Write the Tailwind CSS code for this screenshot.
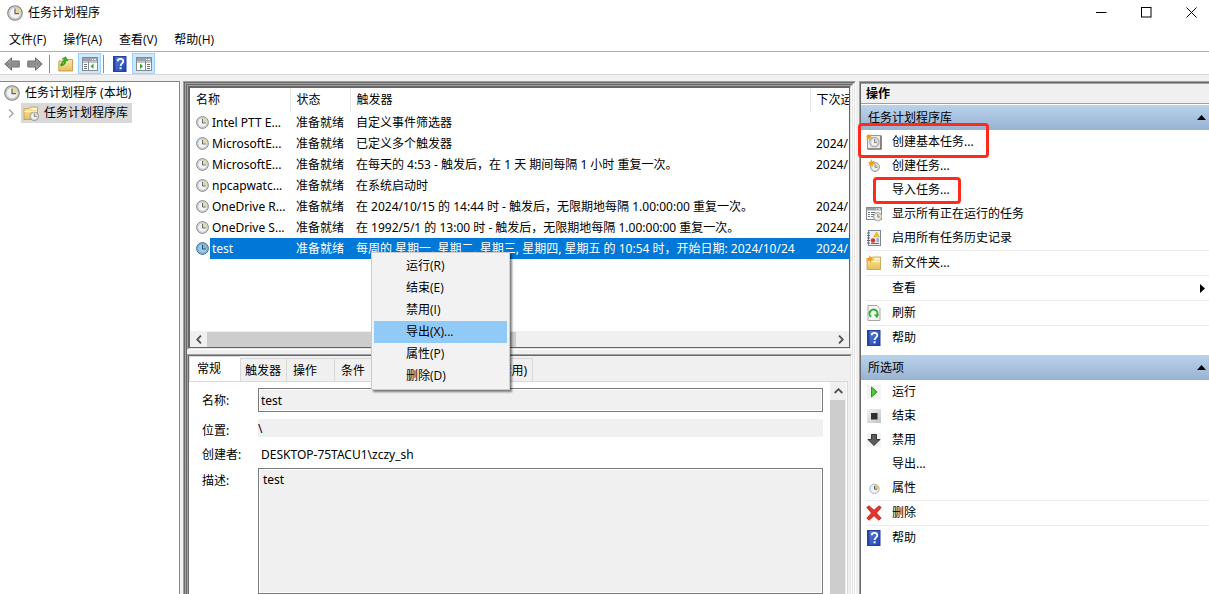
<!DOCTYPE html>
<html lang="zh-CN">
<head>
<meta charset="utf-8">
<title>任务计划程序</title>
<script src="https://cdn.jsdelivr.net/npm/@tailwindcss/browser@4"></script>
</head>
<body class="h-screen overflow-hidden bg-[#f0f0f0] font-['Noto_Sans','Noto_Sans_CJK_SC',sans-serif] text-xs leading-4 text-black">

<svg class="absolute size-0" aria-hidden="true">
  <defs>
    <linearGradient id="gArrow" x1="0" y1="0" x2="0" y2="1"><stop offset="0" stop-color="#b5b5b5"/><stop offset=".5" stop-color="#8a8a8a"/><stop offset="1" stop-color="#a8a8a8"/></linearGradient>
    <linearGradient id="gHelp" x1="0" y1="0" x2="1" y2="1"><stop offset="0" stop-color="#5f86e0"/><stop offset="1" stop-color="#1c3fae"/></linearGradient>
    <linearGradient id="gFolder" x1="0" y1="0" x2="0" y2="1"><stop offset="0" stop-color="#fbe9a8"/><stop offset="1" stop-color="#e6bf5c"/></linearGradient>
    <linearGradient id="gStop" x1="0" y1="0" x2="1" y2="1"><stop offset="0" stop-color="#f4f4f4"/><stop offset="1" stop-color="#c2c2c2"/></linearGradient>
    <symbol id="clock" viewBox="0 0 16 16">
      <circle cx="8" cy="8" r="7.3" fill="#d6d6d6" stroke="#858585" stroke-width="1.1"/>
      <circle cx="8" cy="8" r="5.6" fill="#f1f3f6" stroke="#b4b4b4" stroke-width=".6"/>
      <path d="M8 8V2.4A5.6 5.6 0 0 1 13.6 8Z" fill="#e9d9a0"/>
      <path d="M8 3.5V8.6H12" fill="none" stroke="#5b6675" stroke-width="1.2"/>
    </symbol>
    <symbol id="clockSel" viewBox="0 0 16 16">
      <circle cx="8" cy="8" r="7.3" fill="#8dbbe3" stroke="#38698f" stroke-width="1.1"/>
      <circle cx="8" cy="8" r="5.6" fill="#9cc9ee" stroke="#5f91ba" stroke-width=".6"/>
      <path d="M8 8V2.4A5.6 5.6 0 0 1 13.6 8Z" fill="#8fb7b3"/>
      <path d="M8 3.5V8.6H12" fill="none" stroke="#1e4a72" stroke-width="1.2"/>
    </symbol>
    <symbol id="help" viewBox="0 0 14 16">
      <rect x=".5" y=".5" width="12.5" height="15" fill="url(#gHelp)" stroke="#23409a"/>
      <rect x="0" y="0" width="2.5" height="16" fill="#2443a4"/>
      <path d="M4.8 5.3C4.8 2.2 10.3 2.2 10.3 5.2C10.3 7.3 7.6 7.4 7.6 10" fill="none" stroke="#fff" stroke-width="1.8"/>
      <rect x="6.6" y="11.3" width="2" height="2" fill="#fff"/>
    </symbol>
    <symbol id="arrow" viewBox="0 0 16 14">
      <path d="M.8 7L7.5 .8V4H15.2V10H7.5V13.2Z" fill="url(#gArrow)" stroke="#6d6d6d"/>
    </symbol>
    <symbol id="folder" viewBox="0 0 16 16">
      <path d="M1 14.5V3.5H6L7.5 2H14.5V14.5Z" fill="url(#gFolder)" stroke="#c39b45" stroke-width=".8"/>
      <path d="M9 4H14" stroke="#fff" stroke-width="1.2"/>
      <path d="M1.5 6.5H14" stroke="#fff5cf" stroke-width="1"/>
    </symbol>
    <symbol id="spark" viewBox="0 0 8 8">
      <path d="M4 0L4.8 2.4L7.4 1.2L5.9 3.7L8 5L5.4 5.2L5 8L3.4 5.7L.8 7L2 4.6L0 3.4L2.6 3Z" fill="#f59d18"/>
    </symbol>
    <symbol id="win" viewBox="0 0 16 14">
      <rect x=".5" y=".5" width="15" height="13" fill="#fff" stroke="#868b92"/>
      <rect x="1" y="1" width="14" height="3" fill="#9aa1aa"/>
      <path d="M10 2.5H11M12 2.5H14" stroke="#fff"/>
    </symbol>
  </defs>
</svg>

<div class="flex h-full flex-col">
  <header class="bg-white">
    <div class="flex h-[26px] items-center pl-[7px]">
      <svg class="size-4"><use href="#clock"/></svg>
      <h1 class="ml-[5px]">任务计划程序</h1>
      <div class="ml-auto flex gap-[34px] pr-3 pb-px">
        <button aria-label="最小化"><svg class="size-[11px]" viewBox="0 0 11 11"><path d="M0 5.5H10.5" stroke="#000"/></svg></button>
        <button aria-label="最大化"><svg class="size-[11px]" viewBox="0 0 11 11"><rect x=".5" y=".5" width="9.5" height="9.5" fill="none" stroke="#000"/></svg></button>
        <button aria-label="关闭"><svg class="size-[11px]" viewBox="0 0 11 11"><path d="M.5 .5L10.5 10.5M10.5 .5L.5 10.5" stroke="#000"/></svg></button>
      </div>
    </div>
    <nav class="flex h-[25px] items-center gap-[17px] pt-[3px] pl-[9px] font-['Open_Sans','Noto_Sans_CJK_SC',sans-serif]">
      <button>文件(F)</button><button>操作(A)</button><button>查看(V)</button><button>帮助(H)</button>
    </nav>
    <div class="flex h-6 items-center border-y border-t-[#adb0b6] border-b-[#d9d9d9] pt-px pl-1">
      <button aria-label="后退"><svg class="h-[14px] w-4"><use href="#arrow"/></svg></button>
      <button aria-label="前进" class="ml-[7px]"><svg class="h-[14px] w-4 rotate-180"><use href="#arrow"/></svg></button>
      <span class="ml-[6px] h-[18px] w-px bg-[#8d8d8d]"></span>
      <button aria-label="上一级" class="ml-2"><svg class="size-4" viewBox="0 0 16 16"><path d="M.8 15V5H8L9.5 3.5H14.5V15Z" fill="url(#gFolder)" stroke="#c39b45" stroke-width=".9"/><path d="M3 10C3 6.5 4.5 5.5 6 5V8L2.5 8.5M3 10C6.5 9.5 8 7 8 4.5H10L7.5 .8L4 3H6C5.8 5.5 4.5 7.5 3 10Z" fill="#3db52a" stroke="#248a17" stroke-width=".6"/></svg></button>
      <button aria-label="显示/隐藏控制台树" class="ml-1 flex h-[21px] w-[23px] items-center justify-center border border-[#99d1ff] bg-[#cce8ff]"><svg class="h-[14px] w-4" viewBox="0 0 16 14"><use href="#win"/><path d="M6.5 4V13M1 5H15" stroke="#868b92"/><path d="M2 7.5H5M2 9.5H5M2 11.5H5" stroke="#6c7680"/><path d="M11.5 6.5V12L8.5 9.2Z" fill="#37a52b"/></svg></button>
      <span class="ml-[2px] h-[18px] w-px bg-[#8d8d8d]"></span>
      <button aria-label="帮助" class="ml-[9px]"><svg class="h-4 w-[14px]"><use href="#help"/></svg></button>
      <button aria-label="显示/隐藏操作窗格" class="ml-[5px] flex h-[21px] w-[23px] items-center justify-center border border-[#99d1ff] bg-[#cce8ff]"><svg class="h-[14px] w-4" viewBox="0 0 16 14"><use href="#win"/><path d="M9.5 4V13M1 5H15" stroke="#868b92"/><path d="M11 7.5H14M11 9.5H14M11 11.5H14" stroke="#6c7680"/><path d="M4 6.5V12L7 9.2Z" fill="#37a52b"/></svg></button>
    </div>
  </header>

  <main class="flex min-h-0 flex-1 pt-[6px]">
    <aside class="w-[180px] shrink-0 border-t border-r border-[#828790] bg-white pt-px pl-1">
      <div class="flex h-5 items-center"><svg class="size-4"><use href="#clock"/></svg><span class="ml-[5px]">任务计划程序 (本地)</span></div>
      <div class="flex h-5 items-center">
        <svg class="ml-1 h-[9px] w-[6px]" viewBox="0 0 6 9"><path d="M1 .5L5 4.5L1 8.5" fill="none" stroke="#a0a0a0" stroke-width="1.4"/></svg>
        <div class="ml-[7px] flex h-5 items-center bg-[#d9d9d9] pr-1 pl-[2px]">
          <svg class="size-4" viewBox="0 0 16 16"><use href="#folder"/><use href="#clock" x="6.5" y="6.5" width="9.5" height="9.5"/></svg><span class="ml-[5px]">任务计划程序库</span>
        </div>
      </div>
    </aside>

    <section class="relative ml-[3px] flex min-w-0 flex-1 border border-b-0 border-t-[#a0a0a0] border-r-white border-l-[#a0a0a0]">
     <div class="flex min-w-0 flex-1 border border-b-0 border-t-[#696969] border-r-[#e3e3e3] border-l-[#696969]">
      <div class="flex min-w-0 flex-1 flex-col border border-b-0 border-t-[#a0a0a0] border-r-white border-l-[#a0a0a0]">
       <div class="flex min-h-0 flex-1 flex-col border-x border-t border-t-[#696969] border-r-[#e3e3e3] border-l-[#696969]">
        <div class="h-[265px] shrink-0 border border-t-[#a0a0a0] border-r-white border-b-white border-l-[#a0a0a0]">
         <div class="flex h-full flex-col border border-r-[#e3e3e3] border-b-[#e3e3e3] border-t-[#696969] border-l-[#696969]">
          <div class="flex min-h-0 flex-1 flex-col border border-[#646464] bg-white">
           <div class="min-h-0 flex-1 overflow-hidden">
            <table class="w-[720px] table-fixed border-collapse text-left whitespace-nowrap">
              <colgroup><col class="w-[100px]"><col class="w-[60px]"><col class="w-[460px]"><col class="w-[100px]"></colgroup>
              <thead><tr class="h-6">
                <th class="border-r border-[#e5e5e5] p-0 pl-[6px] font-normal">名称</th>
                <th class="border-r border-[#e5e5e5] p-0 pl-[6px] font-normal">状态</th>
                <th class="border-r border-[#e5e5e5] p-0 pl-[6px] font-normal">触发器</th>
                <th class="p-0 pl-[6px] font-normal">下次运行时间</th>
              </tr></thead>
              <tbody>
                <tr class="h-[21px]"><td class="p-0"><div class="flex items-center pl-[6px]"><svg class="size-[13px]"><use href="#clock"/></svg><span class="ml-[3px]">Intel PTT E...</span></div></td><td class="p-0 pl-[6px]">准备就绪</td><td class="p-0 pl-[6px]">自定义事件筛选器</td><td></td></tr>
                <tr class="h-[21px]"><td class="p-0"><div class="flex items-center pl-[6px]"><svg class="size-[13px]"><use href="#clock"/></svg><span class="ml-[3px]">MicrosoftE...</span></div></td><td class="p-0 pl-[6px]">准备就绪</td><td class="p-0 pl-[6px]">已定义多个触发器</td><td class="p-0 pl-[6px]">2024/10/24</td></tr>
                <tr class="h-[21px]"><td class="p-0"><div class="flex items-center pl-[6px]"><svg class="size-[13px]"><use href="#clock"/></svg><span class="ml-[3px]">MicrosoftE...</span></div></td><td class="p-0 pl-[6px]">准备就绪</td><td class="p-0 pl-[6px]">在每天的 4:53 - 触发后，在 1 天 期间每隔 1 小时 重复一次。</td><td class="p-0 pl-[6px]">2024/10/24</td></tr>
                <tr class="h-[21px]"><td class="p-0"><div class="flex items-center pl-[6px]"><svg class="size-[13px]"><use href="#clock"/></svg><span class="ml-[3px]">npcapwatc...</span></div></td><td class="p-0 pl-[6px]">准备就绪</td><td class="p-0 pl-[6px]">在系统启动时</td><td></td></tr>
                <tr class="h-[21px]"><td class="p-0"><div class="flex items-center pl-[6px]"><svg class="size-[13px]"><use href="#clock"/></svg><span class="ml-[3px]">OneDrive R...</span></div></td><td class="p-0 pl-[6px]">准备就绪</td><td class="p-0 pl-[6px]">在 2024/10/15 的 14:44 时 - 触发后，无限期地每隔 1.00:00:00 重复一次。</td><td class="p-0 pl-[6px]">2024/10/24</td></tr>
                <tr class="h-[21px]"><td class="p-0"><div class="flex items-center pl-[6px]"><svg class="size-[13px]"><use href="#clock"/></svg><span class="ml-[3px]">OneDrive S...</span></div></td><td class="p-0 pl-[6px]">准备就绪</td><td class="p-0 pl-[6px]">在 1992/5/1 的 13:00 时 - 触发后，无限期地每隔 1.00:00:00 重复一次。</td><td class="p-0 pl-[6px]">2024/10/24</td></tr>
                <tr class="h-[21px] text-white"><td class="p-0"><div class="flex items-center pl-[6px]"><svg class="size-[13px]"><use href="#clockSel"/></svg><span class="ml-px h-[21px] flex-1 bg-[#0078d7] pl-[2px] leading-[21px]">test</span></div></td><td class="bg-[#0078d7] p-0 pl-[6px]">准备就绪</td><td class="bg-[#0078d7] p-0 pl-[6px]">每周的 星期一, 星期二, 星期三, 星期四, 星期五 的 10:54 时，开始日期: 2024/10/24</td><td class="bg-[#0078d7] p-0 pl-[6px]">2024/10/24</td></tr>
              </tbody>
            </table>
           </div>
           <div class="flex h-4 items-center justify-between bg-[#f0f0f0]">
             <div class="flex h-full items-center"><button aria-label="向左滚动" class="flex w-[17px] justify-center"><svg class="h-[9px] w-[6px]" viewBox="0 0 6 9"><path d="M5 .7L1.2 4.5L5 8.3" fill="none" stroke="#505050" stroke-width="1.8"/></svg></button><span class="h-[15px] w-[309px] bg-[#cdcdcd]"></span></div>
             <button aria-label="向右滚动" class="flex w-[17px] justify-center"><svg class="h-[9px] w-[6px]" viewBox="0 0 6 9"><path d="M1 .7L4.8 4.5L1 8.3" fill="none" stroke="#505050" stroke-width="1.8"/></svg></button>
           </div>
          </div>
         </div>
        </div>

        <div class="mt-1 flex min-h-0 flex-1 flex-col border border-b-0 border-[#a0a0a0] border-r-white">
         <div class="flex min-h-0 flex-1 flex-col border border-b-0 border-[#696969] border-r-[#e3e3e3] pr-[2px]">
          <div role="tablist" class="flex items-end">
            <button role="tab" aria-selected="true" class="h-[25px] w-[51px] border-t border-l border-[#d9d9d9] bg-white pr-3 pb-px">常规</button>
            <button role="tab" class="h-[23px] w-[47px] border border-b-0 border-[#d9d9d9] pt-px pr-px">触发器</button>
            <button role="tab" class="h-[23px] w-12 border-t border-r border-[#d9d9d9] pt-px pr-[11px]">操作</button>
            <button role="tab" class="h-[23px] w-12 border-t border-r border-[#d9d9d9] pt-px pr-[11px]">条件</button>
            <button role="tab" class="h-[23px] w-12 border-t border-r border-[#d9d9d9] pt-px pr-[11px]">设置</button>
            <button role="tab" class="h-[23px] w-[102px] border-t border-r border-[#d9d9d9] pt-px whitespace-nowrap">历史记录(已禁用)</button>
          </div>
          <div class="flex min-h-0 flex-1 border-t border-r border-[#d9d9d9] bg-white">
            <form class="grid min-h-0 flex-1 grid-cols-[56px_1fr] grid-rows-[24px_18px_18px_1fr] gap-y-[7px] pt-[6px] pr-[7px] pl-[13px]">
              <label for="n" class="pt-[5px]">名称:</label>
              <input id="n" readonly value="test" class="min-w-0 border border-[#7a7a7a] bg-[#f0f0f0] px-[2px] pt-px shadow-[inset_0_0_0_1px_#fff]">
              <label for="p" class="pt-1">位置:</label>
              <input id="p" readonly value="\" class="min-w-0 bg-[#f0f0f0] pt-px">
              <span class="pt-[3px]">创建者:</span>
              <span class="pt-[3px] pl-[3px]">DESKTOP-75TACU1\zczy_sh</span>
              <label for="d" class="pt-1">描述:</label>
              <textarea id="d" readonly class="-mt-px min-h-0 min-w-0 resize-none overflow-hidden border border-[#7a7a7a] bg-[#f0f0f0] px-1 py-[3px] shadow-[inset_0_0_0_1px_#fff]">test</textarea>
            </form>
            <div class="mr-px flex w-4 flex-col bg-[#f0f0f0]">
              <button aria-label="向上滚动" class="flex h-[18px] w-4 shrink-0 items-center justify-center"><svg class="h-[6px] w-[9px]" viewBox="0 0 9 6"><path d="M.7 5L4.5 1.2L8.3 5" fill="none" stroke="#505050" stroke-width="1.8"/></svg></button>
              <span class="mr-px flex-1 bg-[#cdcdcd]"></span>
            </div>
          </div>
         </div>
        </div>
       </div>
      </div>
     </div>

      <div role="menu" class="absolute top-[170px] left-[187px] flex w-[139px] flex-col border border-[#ccc] bg-[#f2f2f2] p-[2px] font-['Open_Sans','Noto_Sans_CJK_SC',sans-serif] shadow-[2px_2px_2px_rgba(0,0,0,0.5)]">
        <button role="menuitem" class="h-[22px] pl-8 text-left">运行(R)</button>
        <button role="menuitem" class="h-[22px] pl-8 text-left">结束(E)</button>
        <button role="menuitem" class="h-[22px] pl-8 text-left">禁用(I)</button>
        <button role="menuitem" class="h-[22px] bg-[#91c9f7] pl-8 text-left">导出(X)...</button>
        <button role="menuitem" class="h-[22px] pl-8 text-left">属性(P)</button>
        <button role="menuitem" class="h-[22px] pl-8 text-left">删除(D)</button>
      </div>
    </section>

    <aside class="ml-[3px] w-[350px] shrink-0 border-t border-l border-[#a0a0a0]">
     <div class="h-full border-t border-l border-[#696969] bg-white">
      <h2 class="h-[21px] border-t border-b border-t-[#a0a0a0] border-b-[#a0a0a0] bg-[#f0f0f0] pt-[2px] pl-[5px] font-bold">操作</h2>
      <button class="mt-px flex h-[25px] w-full items-center justify-between bg-linear-to-b from-[#bad3ec] to-[#98b3d3] pr-[3px] pl-[7px]">任务计划程序库<svg class="h-[5px] w-[9px]" viewBox="0 0 9 5"><path d="M0 5L4.5 0L9 5Z"/></svg></button>
      <div class="flex flex-col pl-[5px]">
        <button class="relative flex h-6 items-center"><svg class="size-4" viewBox="0 0 16 16"><rect x="1.5" y="1.5" width="13.5" height="13.5" fill="#ececec" stroke="#a09494"/><path d="M15 2V15H2" fill="none" stroke="#6a5656" stroke-width="1.2"/><use href="#clock" x="3.2" y="3" width="10.5" height="10.5"/><use href="#spark" x="-.5" y="-.5" width="7" height="7"/></svg><span class="ml-[10px]">创建基本任务...</span><span class="absolute -top-[7px] -left-2 h-[35px] w-[131px] rounded border-[3px] border-[#ff2a1c]"></span></button>
        <button class="flex h-6 items-center"><svg class="size-4" viewBox="0 0 16 16"><use href="#clock" x="4" y="4" width="10" height="10"/><use href="#spark" x="1.5" y="1" width="8" height="8"/></svg><span class="ml-[10px]">创建任务...</span></button>
        <button class="relative flex h-6 items-center pl-[26px]">导入任务...<span class="absolute -top-px left-[7px] h-[27px] w-[88px] rounded border-[3px] border-[#ff2a1c]"></span></button>
        <button class="flex h-6 items-center"><svg class="size-4" viewBox="0 0 16 16"><rect x=".5" y="1.5" width="15" height="12" fill="#fff" stroke="#868b92"/><rect x="1" y="2" width="14" height="2.5" fill="#9aa1aa"/><path d="M10 3H11M12 3H14" stroke="#fff"/><path d="M2 6.5H4M5 6.5H9M2 8.5H4M5 8.5H8M2 10.5H4M5 10.5H7" stroke="#6c7680"/><use href="#clock" x="7" y="6" width="9.5" height="9.5"/></svg><span class="ml-[10px]">显示所有正在运行的任务</span></button>
        <button class="flex h-6 items-center"><svg class="size-4" viewBox="0 0 16 16"><rect x="2.5" y=".5" width="12" height="15" fill="#eaf0fa" stroke="#7d8798"/><path d="M1 3H4M1 5.5H4M1 8H4M1 10.5H4M1 13H4" stroke="#666"/><path d="M10.5 2L13.3 6.8H7.7Z" fill="#f5c518" stroke="#cf9b0a" stroke-width=".5"/><circle cx="7" cy="10.5" r="2.2" fill="#d8352a"/><path d="M10.5 9H13M10.5 11H13M5 13.5H13" stroke="#4c6db0"/></svg><span class="ml-[10px]">启用所有任务历史记录</span></button>
        <button class="flex h-[25px] items-center border-t border-[#ededed]"><svg class="size-4" viewBox="0 0 16 16"><use href="#folder"/><use href="#spark" x="0" y="0" width="8" height="8"/></svg><span class="ml-[10px]">新文件夹...</span></button>
        <button class="flex h-[25px] items-center justify-between border-t border-[#ededed] pr-1 pl-[26px]">查看<svg class="h-[9px] w-[5px]" viewBox="0 0 5 9"><path d="M0 0L5 4.5L0 9Z"/></svg></button>
        <button class="flex h-[25px] items-center border-t border-[#ededed]"><svg class="size-4" viewBox="0 0 16 16"><path d="M2 .5H11L14 3.5V15.5H2Z" fill="#f6f6f6" stroke="#a9a9a9"/><path d="M5.2 11.8A4 4 0 1 1 11 10.5" fill="none" stroke="#35ae37" stroke-width="2"/><path d="M7.8 9.5H13.2L11 13.3Z" fill="#35ae37"/></svg><span class="ml-[10px]">刷新</span></button>
        <button class="flex h-[25px] items-center border-t border-[#ededed] pl-px"><svg class="h-4 w-[14px]"><use href="#help"/></svg><span class="ml-[11px]">帮助</span></button>
      </div>
      <button class="mt-[5px] flex h-[25px] w-full items-center justify-between bg-linear-to-b from-[#bad3ec] to-[#98b3d3] pr-[3px] pl-[7px]">所选项<svg class="h-[5px] w-[9px]" viewBox="0 0 9 5"><path d="M0 5L4.5 0L9 5Z"/></svg></button>
      <div class="flex flex-col pl-[5px]">
        <button class="flex h-6 items-center"><svg class="size-4" viewBox="0 0 16 16"><rect x="1" y="1" width="14" height="14" fill="#f3f3f3"/><path d="M5.5 3L11 8L5.5 13Z" fill="#4cc93c" stroke="#1f9a1a"/></svg><span class="ml-[10px]">运行</span></button>
        <button class="flex h-6 items-center"><svg class="size-4" viewBox="0 0 16 16"><rect x="1" y="1" width="14" height="14" fill="url(#gStop)"/><rect x="5" y="5" width="6.5" height="6.5" fill="#2f2f2f"/></svg><span class="ml-[10px]">结束</span></button>
        <button class="flex h-6 items-center"><svg class="size-4" viewBox="0 0 16 16"><rect x="1" y="1" width="14" height="14" fill="#f3f3f3"/><path d="M5.5 2.5H10.5V7.5H14L8 13.5L2 7.5H5.5Z" fill="#5c5c5c" stroke="#383838"/></svg><span class="ml-[10px]">禁用</span></button>
        <button class="flex h-6 items-center pl-[26px]">导出...</button>
        <button class="flex h-6 items-center"><svg class="size-4" viewBox="0 0 16 16"><circle cx="8.5" cy="8.8" r="4.7" fill="#eef3f9" stroke="#aab4c0"/><path d="M8.5 8.8V4.2A4.6 4.6 0 0 1 13.1 8.8Z" fill="#eec368"/><path d="M8.5 6V9.2H11.2" fill="none" stroke="#4a5a6e"/></svg><span class="ml-[10px]">属性</span></button>
        <button class="flex h-[25px] items-center border-t border-[#ededed]"><svg class="size-4" viewBox="0 0 16 16"><path d="M.8 2.5L3 .8L8 5.3L13 .8L15.2 2.5L10.5 8L15.2 13.2L12.8 15.2L8 10.7L3.2 15.2L.8 13.2L5.5 8Z" fill="#e8332c" stroke="#b3211f" stroke-width=".8"/></svg><span class="ml-[10px]">删除</span></button>
        <button class="flex h-[25px] items-center border-t border-[#ededed] pl-px"><svg class="h-4 w-[14px]"><use href="#help"/></svg><span class="ml-[11px]">帮助</span></button>
      </div>
     </div>
    </aside>
  </main>
</div>
</body>
</html>
